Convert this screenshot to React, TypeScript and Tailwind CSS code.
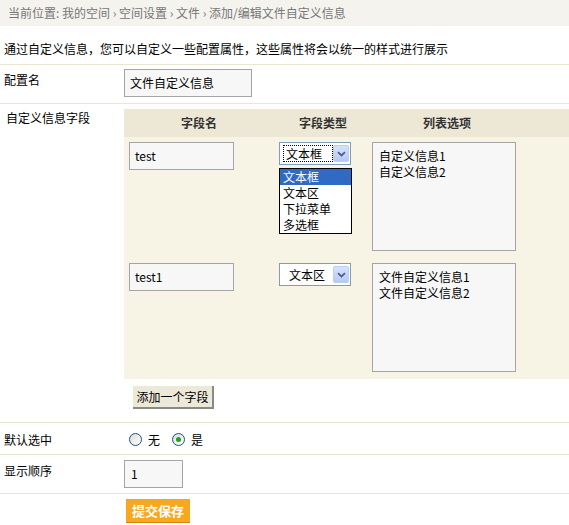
import React from 'react';

const font = { fontFamily: '"Noto Sans CJK SC", "Liberation Sans", sans-serif' };

function Radio({ checked }: { checked?: boolean }) {
  return (
    <span className="relative inline-flex h-[13px] w-[13px] items-center justify-center rounded-full border border-[#1c5180] bg-gradient-to-br from-[#dcdcd5] to-white">
      {checked && <span className="h-[5px] w-[5px] rounded-full bg-[#21a121]" />}
    </span>
  );
}

function FakeSelect({ value, focused }: { value: string; focused?: boolean }) {
  return (
    <div className="flex h-[23px] w-[72px] items-center border border-[#7f9db9] bg-white pl-[3px] pr-[1px]">
      <span
        className={
          'flex h-[17px] w-[50px] items-center pl-[2px] leading-none ' +
          (focused ? 'border border-dotted border-black' : 'border border-transparent pl-[5px]')
        }
      >
        {value}
      </span>
      <span className="ml-auto flex h-[17px] w-[16px] items-center justify-center rounded-[2px] border border-[#b9cdf5] bg-gradient-to-b from-[#d7e3fd] to-[#b4c9f5]">
        <svg width="9" height="6" viewBox="0 0 9 6">
          <path d="M1 1.2 L4.5 4.5 L8 1.2" stroke="#4d6185" strokeWidth="1.8" fill="none" />
        </svg>
      </span>
    </div>
  );
}

function Field({
  name,
  type,
  options,
  open,
}: {
  name: string;
  type: string;
  options: string[];
  open?: boolean;
}) {
  return (
    <div className="flex">
      <div className="w-[155px] pl-[5px]">
        <div className="flex h-[28px] w-[105px] items-center border border-[#a5a5a5] bg-[#f7f7f7] px-[5px]">
          {name}
        </div>
      </div>
      <div className="relative w-[93px]">
        <FakeSelect value={type} focused={open} />
        {open && (
          <ul className="absolute left-0 top-[26px] z-10 w-[73px] border border-black bg-white">
            {['文本框', '文本区', '下拉菜单', '多选框'].map((o, i) => (
              <li
                key={o}
                className={
                  'h-[16px] pl-[3px] leading-[16px] ' + (i === 0 ? 'bg-[#316ac5] text-white' : '')
                }
              >
                {o}
              </li>
            ))}
          </ul>
        )}
      </div>
      <div className="h-[109px] w-[144px] border border-[#a5a5a5] bg-[#f7f7f7] px-[6px] py-[5px] leading-[16px]">
        {options.map((o) => (
          <div key={o}>{o}</div>
        ))}
      </div>
    </div>
  );
}

export default function App() {
  return (
    <div className="min-h-[525px] w-[569px] bg-white text-[12px] text-black" style={font}>
      <div className="flex h-[26px] items-center bg-[#f4f3ee] pl-[8px] text-[#777]">
        当前位置: 我的空间 › 空间设置 › 文件 › 添加/编辑文件自定义信息
      </div>

      <div className="h-[39px] border-b border-[#ebe6d3] pl-[4px] pt-[14px] leading-[18px]">
        通过自定义信息，您可以自定义一些配置属性，这些属性将会以统一的样式进行展示
      </div>

      <div className="flex h-[39px] border-b border-[#ebe6d3]">
        <div className="w-[124px] pl-[4px] pt-[6px] leading-[18px]">配置名</div>
        <div className="pt-[4px]">
          <div className="flex h-[28px] w-[128px] items-center border border-[#a5a5a5] bg-[#f7f7f7] px-[5px]">
            文件自定义信息
          </div>
        </div>
      </div>

      <div className="flex border-b border-[#ebe6d3]">
        <div className="w-[124px] shrink-0 pl-[6px] pt-[5px] leading-[18px]">自定义信息字段</div>
        <div className="flex-1 pt-[5px] pb-[13px]">
          <div className="bg-[#f7f4e6]">
            <div className="flex h-[28px] items-center bg-[#ede8d6] font-bold text-[#333]">
              <div className="w-[150px] text-center">字段名</div>
              <div className="w-[98px] text-center">字段类型</div>
              <div className="w-[150px] text-center">列表选项</div>
            </div>
            <div className="flex flex-col gap-[12px] pb-[7px] pt-[5px]">
              <Field name="test" type="文本框" options={['自定义信息1', '自定义信息2']} open />
              <Field name="test1" type="文本区" options={['文件自定义信息1', '文件自定义信息2']} />
            </div>
          </div>
          <button className="ml-[9px] mt-[7px] h-[23px] w-[81px] border-b-2 border-r-2 border-[#8c8a80] bg-[#ece9d8] text-[12px]">
            添加一个字段
          </button>
        </div>
      </div>

      <div className="flex h-[32px] items-center border-b border-[#ebe6d3] pt-[2px]">
        <div className="w-[124px] pl-[4px]">默认选中</div>
        <label className="ml-[5px] flex items-center gap-[6px]">
          <Radio />
          无
        </label>
        <label className="ml-[12px] flex items-center gap-[6px]">
          <Radio checked />
          是
        </label>
      </div>

      <div className="flex h-[39px] border-b border-[#ebe6d3]">
        <div className="w-[124px] pl-[4px] pt-[7px] leading-[18px]">显示顺序</div>
        <div className="pt-[5px]">
          <div className="flex h-[28px] w-[59px] items-center border border-[#a5a5a5] bg-[#f7f7f7] px-[6px]">
            1
          </div>
        </div>
      </div>

      <div className="pl-[126px] pt-[5px]">
        <button className="h-[24px] w-[64px] border-b border-[#d48a10] bg-[#f6a821] text-[13px] font-bold text-white">
          提交保存
        </button>
      </div>
    </div>
  );
}
